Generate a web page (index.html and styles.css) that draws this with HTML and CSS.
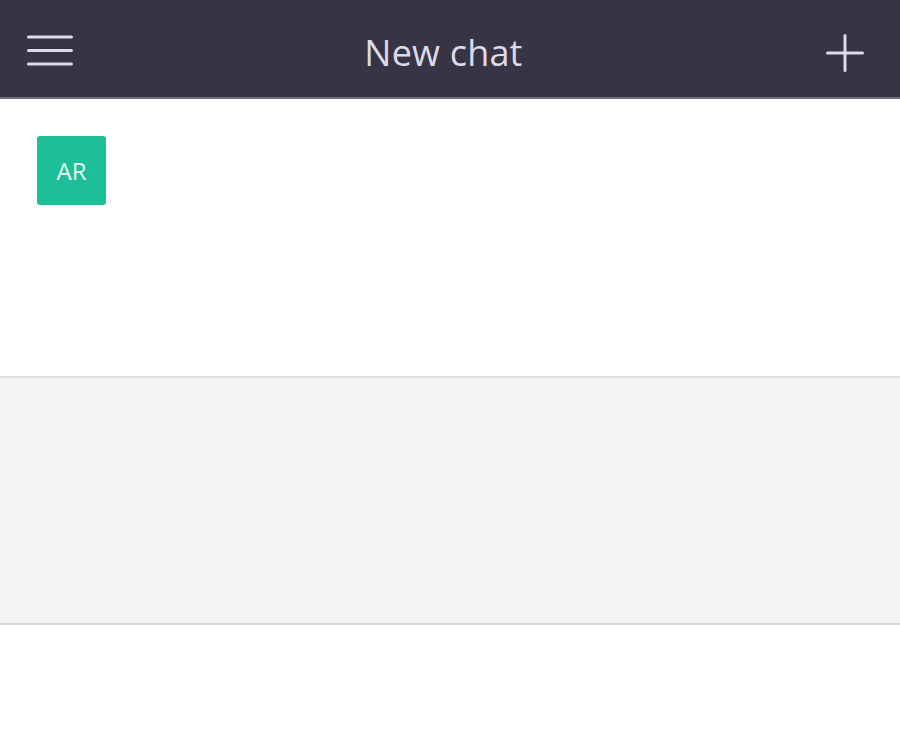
FILE: index.html
```html
<!DOCTYPE html>
<html lang="en">
<head>
    <meta charset="UTF-8">
    <meta name="viewport" content="width=device-width, initial-scale=1.0">
    <title>New chat</title>
    <link rel="stylesheet" href="styles.css">
</head>
<body>
    <header class="topbar">
        <button type="button" class="icon-btn menu-btn" aria-label="Menu">
            <svg width="46" height="32" viewBox="0 0 46 32">
                <path d="M1.5 3h43M1.5 16.5h43M1.5 30h43" stroke="#dddbe8" stroke-width="3" stroke-linecap="round" fill="none"/>
            </svg>
        </button>
        <h1 class="title">New chat</h1>
        <button type="button" class="icon-btn add-btn" aria-label="New">
            <svg width="38" height="38" viewBox="0 0 38 38">
                <path d="M19 1.5v35M1.5 19h35" stroke="#dddbe8" stroke-width="3" stroke-linecap="round" fill="none"/>
            </svg>
        </button>
    </header>
    <section class="recipients">
        <div class="avatar">AR</div>
    </section>
    <section class="compose"></section>
</body>
</html>
```

FILE: styles.css
```css
body {
    margin: 0;
    padding: 0;
    background-color: #ffffff;
    font-family: "Open Sans", "Liberation Sans", sans-serif;
}

.topbar {
    height: 97px;
    background-color: #373545;
    border-bottom: 2px solid #6d6b78;
    display: flex;
    align-items: center;
    justify-content: space-between;
    padding: 0 36px 0 27px;
    box-sizing: content-box;
}

.icon-btn {
    background: none;
    border: none;
    padding: 0;
    display: flex;
    cursor: pointer;
}

.menu-btn {
    margin-top: 3px;
}

.add-btn {
    margin-top: 9px;
}

.title {
    margin: 0;
    color: #dddbe8;
    font-size: 36px;
    font-weight: 400;
    letter-spacing: 0.2px;
    padding-right: 12px;
    margin-top: 8px;
}

.recipients {
    height: 277px;
    padding: 37px 0 0 37px;
    box-sizing: border-box;
}

.avatar {
    width: 69px;
    height: 69px;
    border-radius: 3px;
    background-color: #1dbf98;
    color: #e8f8f2;
    font-size: 24px;
    display: flex;
    align-items: center;
    justify-content: center;
}

.compose {
    height: 245px;
    background-color: #f4f4f4;
    border-top: 2px solid #e0e0e0;
    border-bottom: 2px solid #d8d8d8;
}
```
